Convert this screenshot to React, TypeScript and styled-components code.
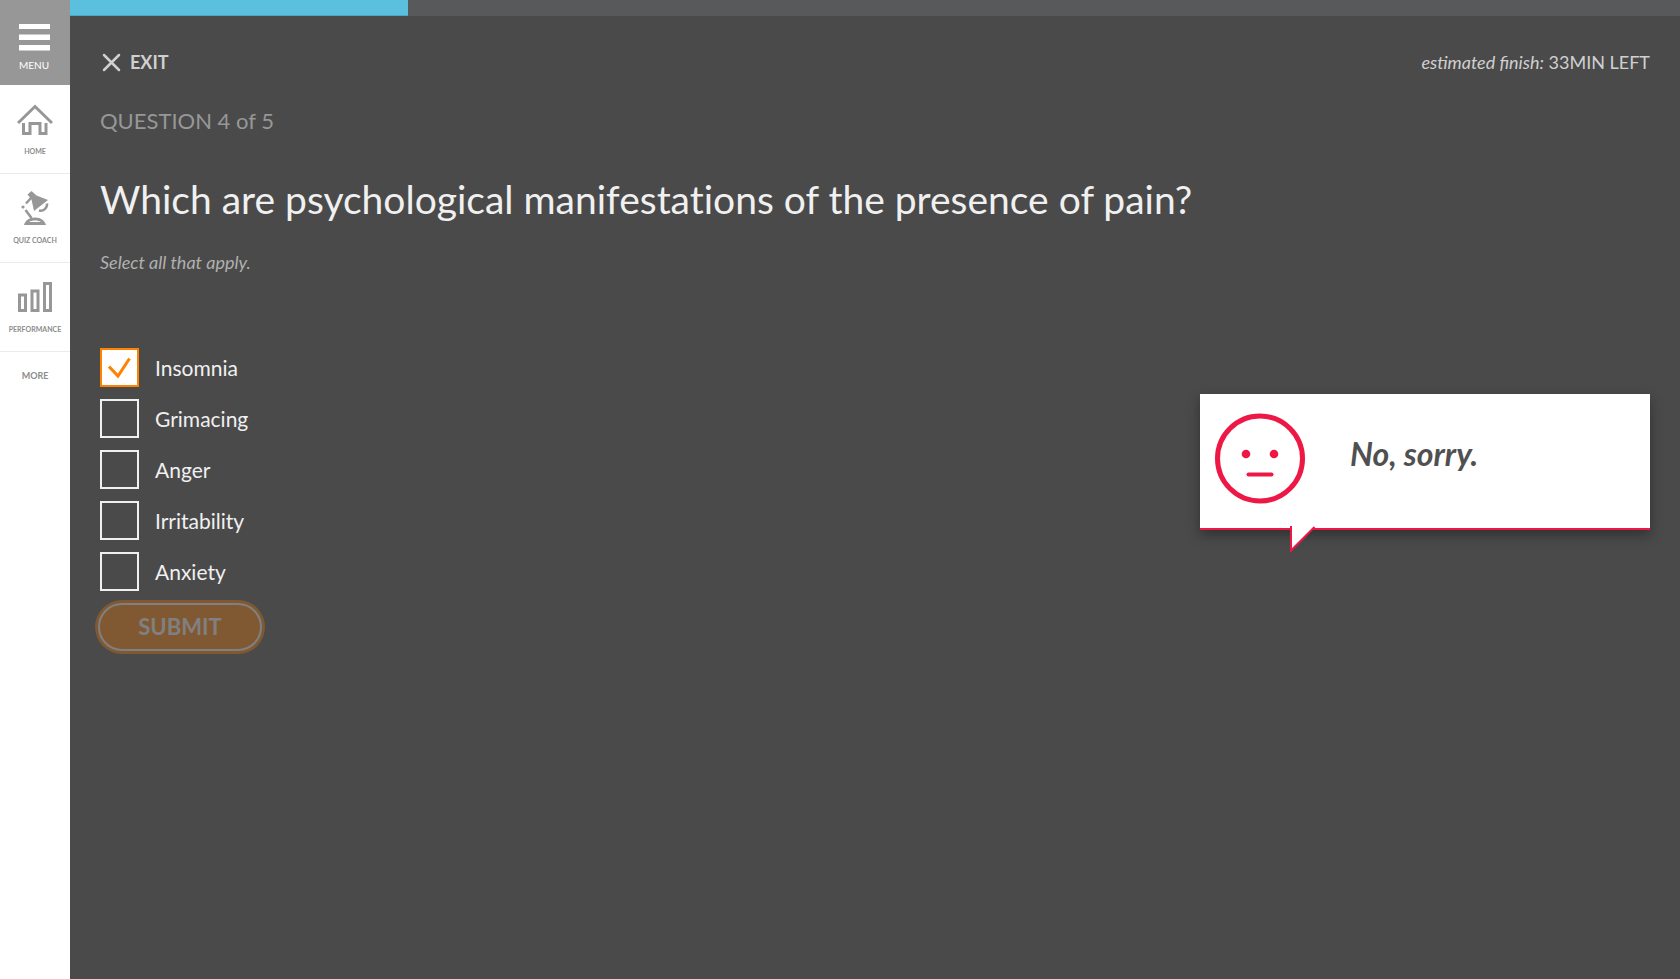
import React, { useState } from "react";
import styled, { createGlobalStyle } from "styled-components";

const GlobalStyle = createGlobalStyle`
  *, *::before, *::after { box-sizing: border-box; }
  body {
    margin: 0;
    background: #4a4a4a;
    color: #f0f0f0;
    font-family: Lato, "Open Sans", sans-serif;
  }
  button { font-family: inherit; cursor: pointer; }
`;

const Page = styled.div`
  display: flex;
  min-height: 100vh;
`;

const Sidebar = styled.nav`
  flex: 0 0 70px;
  display: flex;
  flex-direction: column;
  background: #fff;
`;

const MenuButton = styled.button`
  display: flex;
  flex-direction: column;
  align-items: center;
  gap: 8px;
  height: 85px;
  padding: 24px 2px 0 0;
  border: 0;
  background: #979797;
  color: #fff;
  font-size: 10px;
  line-height: 12px;
`;

const NavLink = styled.a`
  display: flex;
  flex-direction: column;
  align-items: center;
  gap: 8px;
  height: 89px;
  padding-top: 16px;
  border-bottom: 1px solid #ebebeb;
  color: #8c8c8c;
  font-size: 7px;
  font-weight: 700;
  line-height: 12px;
  text-decoration: none;
`;

const MoreButton = styled.button`
  padding: 18px 0;
  border: 0;
  background: none;
  color: #8c8c8c;
  font-size: 9px;
  font-weight: 700;
  line-height: 12px;
`;

const Main = styled.main`
  flex: 1;
  min-width: 0;
`;

const Track = styled.div`
  height: 16px;
  background: #58595b;
`;

const Progress = styled.div`
  height: 100%;
  border-bottom: 1px solid #4aa6c4;
  background: #5bc0de;
`;

const Content = styled.div`
  padding: 34px 30px;
`;

const TopBar = styled.header`
  display: flex;
  justify-content: space-between;
  align-items: center;
  height: 24px;
`;

const ExitButton = styled.button`
  display: flex;
  align-items: center;
  gap: 9px;
  padding: 0 2px;
  border: 0;
  background: none;
  color: #d0d0d0;
  font-size: 18px;
  font-weight: 700;
  line-height: 24px;
`;

const Estimate = styled.p`
  margin: 0;
  color: #d0d0d0;
  font-size: 18px;
  line-height: 22px;
`;

const Counter = styled.p`
  margin: 33px 0 0;
  color: #979797;
  font-size: 22px;
  line-height: 28px;
`;

const Question = styled.h1`
  margin: 40px 0 0;
  font-size: 39px;
  font-weight: 400;
  font-variant-ligatures: none;
  line-height: 48px;
`;

const Hint = styled.p`
  margin: 27px 0 0;
  color: #b0b0b0;
  font-size: 18px;
  font-style: italic;
  line-height: 24px;
`;

const AnswerArea = styled.div`
  display: flex;
  justify-content: space-between;
  align-items: flex-start;
  margin-top: 74px;
`;

const Answers = styled.form`
  display: flex;
  flex-direction: column;
  align-items: flex-start;
  gap: 12px;
`;

const Option = styled.label`
  display: flex;
  align-items: center;
  gap: 16px;
  font-size: 21px;
  line-height: 24px;
  cursor: pointer;
`;

const BoxCell = styled.span`
  display: grid;
  place-items: center;
  & > * { grid-area: 1 / 1; }
  & > svg { pointer-events: none; z-index: 1; }
`;

const Box = styled.input`
  appearance: none;
  width: 39px;
  height: 39px;
  margin: 0;
  border: 2px solid #f0f0f0;
  &:checked {
    border-color: #ff8200;
    background: #fff;
  }
`;

const SubmitButton = styled.button`
  margin: -3px 0 0 -5px;
  padding: 3px;
  border: 0;
  border-radius: 27px;
  background: #805932;
  color: #808080;
  font-size: 22px;
  font-weight: 700;
  line-height: 44px;
`;

const SubmitLabel = styled.span`
  display: block;
  width: 164px;
  border: 2px solid #808080;
  border-radius: 24px;
`;

const Feedback = styled.aside`
  position: relative;
  display: flex;
  gap: 45px;
  width: 450px;
  height: 136px;
  margin-top: 46px;
  padding: 19px 15px;
  border-bottom: 2px solid #ed1846;
  background: #fff;
  box-shadow: 0 5px 12px rgba(0, 0, 0, 0.35);
  color: #505050;
`;

const Verdict = styled.p`
  margin: 23px 0 0;
  font-size: 32px;
  font-style: italic;
  font-weight: 700;
  line-height: 36px;
`;

const Tail = styled.svg`
  position: absolute;
  top: 100%;
  left: 90px;
`;

const MenuIcon = () => (
  <svg width="31" height="27" viewBox="0 0 31 27" fill="#fff" aria-hidden="true">
    <path d="M0 0h31v5H0zM0 10.500h31v5.500H0zM0 21h31v5.500H0z" />
  </svg>
);

const HomeIcon = () => (
  <svg width="36" height="36" viewBox="0 0 36 36" fill="none" stroke="#979797" strokeWidth="3" aria-hidden="true">
    <path d="M1 22 18 5.500 35 22" />
    <path d="M6.500 22v10.500h6.500V22.500h10V32.500H29V22" />
  </svg>
);

const LampIcon = () => (
  <svg width="36" height="36" viewBox="0 0 36 36" aria-hidden="true">
    <path d="M10.500 4.500 14.500 1l5 4.500L31 10 17 21 14.500 9.500z" fill="#979797" />
    <path d="M14.500 7.500 9 13.500M8.500 20l6 8" fill="none" stroke="#979797" strokeWidth="2.500" />
    <circle cx="6" cy="17" r="1.600" fill="#979797" />
    <path d="M30 13.500a6.500 6.500 0 0 1-8 7" fill="none" stroke="#979797" strokeWidth="2.500" />
    <path d="M7 35c1-4 5-7.500 11-7.500S28 31 29 35zM12 32h12c-3-2-9-2-12 0z" fill="#979797" fillRule="evenodd" />
  </svg>
);

const ChartIcon = () => (
  <svg width="36" height="36" viewBox="0 0 36 36" fill="none" stroke="#979797" strokeWidth="3" aria-hidden="true">
    <path d="M2.500 16h6v15.500h-6zM15 12h6v19.500h-6zM27.500 4.500h6v27h-6z" />
  </svg>
);

const CrossIcon = () => (
  <svg width="19" height="19" viewBox="0 0 19 19" stroke="#d0d0d0" strokeWidth="2.500" strokeLinecap="round" aria-hidden="true">
    <path d="M2 2l15 15M17 2 2 17" />
  </svg>
);

const TickIcon = () => (
  <svg width="24" height="22" viewBox="0 0 24 22" fill="none" stroke="#ff8200" strokeWidth="3" aria-hidden="true">
    <path d="M1 9.500l9 9.500L21.500 1.500" />
  </svg>
);

const FaceIcon = () => (
  <svg width="90" height="91" viewBox="0 0 90 91" fill="none" stroke="#ed1846" aria-hidden="true">
    <circle cx="45" cy="45.500" r="42.500" strokeWidth="5" />
    <circle cx="31" cy="41" r="4.300" fill="#ed1846" stroke="none" />
    <circle cx="59" cy="41" r="4.300" fill="#ed1846" stroke="none" />
    <path d="M33.500 61.500h23" strokeWidth="4" strokeLinecap="round" />
  </svg>
);

const links = [
  { label: "HOME", Icon: HomeIcon },
  { label: "QUIZ COACH", Icon: LampIcon },
  { label: "PERFORMANCE", Icon: ChartIcon },
];

const options = ["Insomnia", "Grimacing", "Anger", "Irritability", "Anxiety"];

export default function App() {
  const [picked, setPicked] = useState<string[]>(["Insomnia"]);
  const toggle = (name: string) =>
    setPicked((now) => (now.includes(name) ? now.filter((n) => n !== name) : [...now, name]));

  return (
    <>
      <GlobalStyle />
      <Page>
        <Sidebar>
          <MenuButton type="button">
            <MenuIcon />
            MENU
          </MenuButton>
          {links.map(({ label, Icon }) => (
            <NavLink href="#" key={label}>
              <Icon />
              {label}
            </NavLink>
          ))}
          <MoreButton type="button">MORE</MoreButton>
        </Sidebar>
        <Main>
          <Track>
            <Progress style={{ width: "21%" }} />
          </Track>
          <Content>
            <TopBar>
              <ExitButton type="button">
                <CrossIcon />
                EXIT
              </ExitButton>
              <Estimate>
                <em>estimated finish:</em> 33MIN LEFT
              </Estimate>
            </TopBar>
            <Counter>QUESTION 4 of 5</Counter>
            <Question>Which are psychological manifestations of the presence of pain?</Question>
            <Hint>Select all that apply.</Hint>
            <AnswerArea>
              <Answers onSubmit={(e) => e.preventDefault()}>
                {options.map((name) => (
                  <Option key={name}>
                    <BoxCell>
                      <Box type="checkbox" checked={picked.includes(name)} onChange={() => toggle(name)} />
                      {picked.includes(name) && <TickIcon />}
                    </BoxCell>
                    {name}
                  </Option>
                ))}
                <SubmitButton type="submit" disabled>
                  <SubmitLabel>SUBMIT</SubmitLabel>
                </SubmitButton>
              </Answers>
              <Feedback>
                <FaceIcon />
                <Verdict>No, sorry.</Verdict>
                <Tail width="25" height="25" viewBox="0 0 25 25" overflow="visible" aria-hidden="true">
                  <path d="M1-2V22.500L24-1V-2z" fill="#fff" />
                  <path d="M1-2V22.500L24.500-1" fill="none" stroke="#ed1846" strokeWidth="2" />
                </Tail>
              </Feedback>
            </AnswerArea>
          </Content>
        </Main>
      </Page>
    </>
  );
}
